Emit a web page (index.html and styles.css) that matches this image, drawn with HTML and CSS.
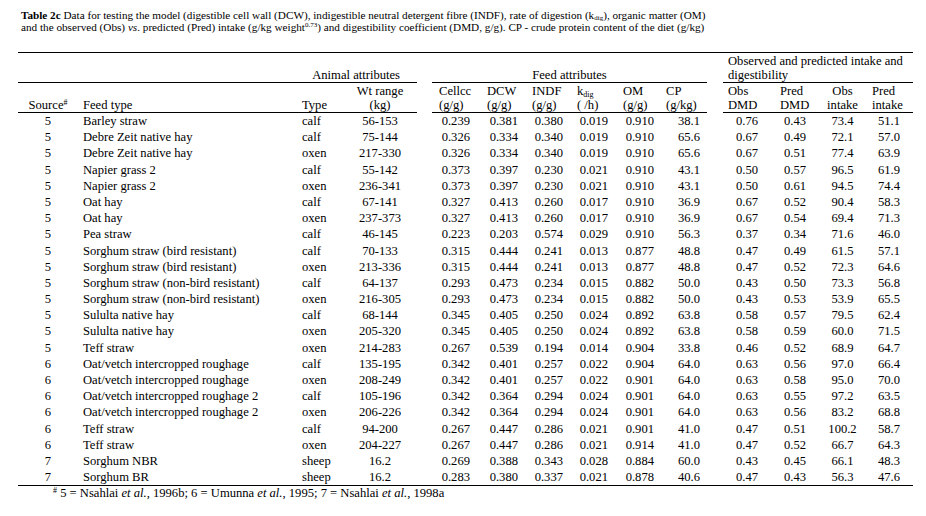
FILE: index.html
```html
<!DOCTYPE html>
<html lang="en">
<head>
<meta charset="utf-8">
<title>Table 2c</title>
<link rel="stylesheet" href="styles.css">
</head>
<body>
<div class="page">
  <p class="caption"><b>Table 2c</b> Data for testing the model (digestible cell wall (DCW), indigestible neutral detergent fibre (INDF), rate of digestion (k<sub>dig</sub>), organic matter (OM)<br>and the observed (Obs) <i>vs</i>. predicted (Pred) intake (g/kg weight<sup>0.73</sup>) and digestibility coefficient (DMD, g/g). CP - crude protein content of the diet (g/kg)</p>

  <div class="table">
    <div class="groups">
      <div class="grp grp-animal"><span>Animal attributes</span></div>
      <div class="grp grp-feed"><span>Feed attributes</span></div>
      <div class="grp grp-obs"><span>Observed and predicted intake and</span><span>digestibility</span></div>
    </div>
    <div class="hrow">
      <div><span>Source<sup>#</sup></span></div>
      <div><span>Feed type</span></div>
      <div><span>Type</span></div>
      <div><span>Wt range</span><span>(kg)</span></div>
      <div><span>Cellcc</span><span>(g/g)</span></div>
      <div><span>DCW</span><span>(g/g)</span></div>
      <div><span>INDF</span><span>(g/g)</span></div>
      <div><span>k<sub>dig</sub></span><span>( /h)</span></div>
      <div><span>OM</span><span>(g/g)</span></div>
      <div><span>CP</span><span>(g/kg)</span></div>
      <div><span>Obs</span><span>DMD</span></div>
      <div><span>Pred</span><span>DMD</span></div>
      <div><span>Obs</span><span>intake</span></div>
      <div><span>Pred</span><span>intake</span></div>
    </div>

    <div class="row"><div>5</div><div>Barley straw</div><div>calf</div><div>56-153</div><div>0.239</div><div>0.381</div><div>0.380</div><div>0.019</div><div>0.910</div><div>38.1</div><div>0.76</div><div>0.43</div><div>73.4</div><div>51.1</div></div>
    <div class="row"><div>5</div><div>Debre Zeit native hay</div><div>calf</div><div>75-144</div><div>0.326</div><div>0.334</div><div>0.340</div><div>0.019</div><div>0.910</div><div>65.6</div><div>0.67</div><div>0.49</div><div>72.1</div><div>57.0</div></div>
    <div class="row"><div>5</div><div>Debre Zeit native hay</div><div>oxen</div><div>217-330</div><div>0.326</div><div>0.334</div><div>0.340</div><div>0.019</div><div>0.910</div><div>65.6</div><div>0.67</div><div>0.51</div><div>77.4</div><div>63.9</div></div>
    <div class="row"><div>5</div><div>Napier grass 2</div><div>calf</div><div>55-142</div><div>0.373</div><div>0.397</div><div>0.230</div><div>0.021</div><div>0.910</div><div>43.1</div><div>0.50</div><div>0.57</div><div>96.5</div><div>61.9</div></div>
    <div class="row"><div>5</div><div>Napier grass 2</div><div>oxen</div><div>236-341</div><div>0.373</div><div>0.397</div><div>0.230</div><div>0.021</div><div>0.910</div><div>43.1</div><div>0.50</div><div>0.61</div><div>94.5</div><div>74.4</div></div>
    <div class="row"><div>5</div><div>Oat hay</div><div>calf</div><div>67-141</div><div>0.327</div><div>0.413</div><div>0.260</div><div>0.017</div><div>0.910</div><div>36.9</div><div>0.67</div><div>0.52</div><div>90.4</div><div>58.3</div></div>
    <div class="row"><div>5</div><div>Oat hay</div><div>oxen</div><div>237-373</div><div>0.327</div><div>0.413</div><div>0.260</div><div>0.017</div><div>0.910</div><div>36.9</div><div>0.67</div><div>0.54</div><div>69.4</div><div>71.3</div></div>
    <div class="row"><div>5</div><div>Pea straw</div><div>calf</div><div>46-145</div><div>0.223</div><div>0.203</div><div>0.574</div><div>0.029</div><div>0.910</div><div>56.3</div><div>0.37</div><div>0.34</div><div>71.6</div><div>46.0</div></div>
    <div class="row"><div>5</div><div>Sorghum straw (bird resistant)</div><div>calf</div><div>70-133</div><div>0.315</div><div>0.444</div><div>0.241</div><div>0.013</div><div>0.877</div><div>48.8</div><div>0.47</div><div>0.49</div><div>61.5</div><div>57.1</div></div>
    <div class="row"><div>5</div><div>Sorghum straw (bird resistant)</div><div>oxen</div><div>213-336</div><div>0.315</div><div>0.444</div><div>0.241</div><div>0.013</div><div>0.877</div><div>48.8</div><div>0.47</div><div>0.52</div><div>72.3</div><div>64.6</div></div>
    <div class="row"><div>5</div><div>Sorghum straw (non-bird resistant)</div><div>calf</div><div>64-137</div><div>0.293</div><div>0.473</div><div>0.234</div><div>0.015</div><div>0.882</div><div>50.0</div><div>0.43</div><div>0.50</div><div>73.3</div><div>56.8</div></div>
    <div class="row"><div>5</div><div>Sorghum straw (non-bird resistant)</div><div>oxen</div><div>216-305</div><div>0.293</div><div>0.473</div><div>0.234</div><div>0.015</div><div>0.882</div><div>50.0</div><div>0.43</div><div>0.53</div><div>53.9</div><div>65.5</div></div>
    <div class="row"><div>5</div><div>Sululta native hay</div><div>calf</div><div>68-144</div><div>0.345</div><div>0.405</div><div>0.250</div><div>0.024</div><div>0.892</div><div>63.8</div><div>0.58</div><div>0.57</div><div>79.5</div><div>62.4</div></div>
    <div class="row"><div>5</div><div>Sululta native hay</div><div>oxen</div><div>205-320</div><div>0.345</div><div>0.405</div><div>0.250</div><div>0.024</div><div>0.892</div><div>63.8</div><div>0.58</div><div>0.59</div><div>60.0</div><div>71.5</div></div>
    <div class="row"><div>5</div><div>Teff straw</div><div>oxen</div><div>214-283</div><div>0.267</div><div>0.539</div><div>0.194</div><div>0.014</div><div>0.904</div><div>33.8</div><div>0.46</div><div>0.52</div><div>68.9</div><div>64.7</div></div>
    <div class="row"><div>6</div><div>Oat/vetch intercropped roughage</div><div>calf</div><div>135-195</div><div>0.342</div><div>0.401</div><div>0.257</div><div>0.022</div><div>0.904</div><div>64.0</div><div>0.63</div><div>0.56</div><div>97.0</div><div>66.4</div></div>
    <div class="row"><div>6</div><div>Oat/vetch intercropped roughage</div><div>oxen</div><div>208-249</div><div>0.342</div><div>0.401</div><div>0.257</div><div>0.022</div><div>0.901</div><div>64.0</div><div>0.63</div><div>0.58</div><div>95.0</div><div>70.0</div></div>
    <div class="row"><div>6</div><div>Oat/vetch intercropped roughage 2</div><div>calf</div><div>105-196</div><div>0.342</div><div>0.364</div><div>0.294</div><div>0.024</div><div>0.901</div><div>64.0</div><div>0.63</div><div>0.55</div><div>97.2</div><div>63.5</div></div>
    <div class="row"><div>6</div><div>Oat/vetch intercropped roughage 2</div><div>oxen</div><div>206-226</div><div>0.342</div><div>0.364</div><div>0.294</div><div>0.024</div><div>0.901</div><div>64.0</div><div>0.63</div><div>0.56</div><div>83.2</div><div>68.8</div></div>
    <div class="row"><div>6</div><div>Teff straw</div><div>calf</div><div>94-200</div><div>0.267</div><div>0.447</div><div>0.286</div><div>0.021</div><div>0.901</div><div>41.0</div><div>0.47</div><div>0.51</div><div>100.2</div><div>58.7</div></div>
    <div class="row"><div>6</div><div>Teff straw</div><div>oxen</div><div>204-227</div><div>0.267</div><div>0.447</div><div>0.286</div><div>0.021</div><div>0.914</div><div>41.0</div><div>0.47</div><div>0.52</div><div>66.7</div><div>64.3</div></div>
    <div class="row"><div>7</div><div>Sorghum NBR</div><div>sheep</div><div>16.2</div><div>0.269</div><div>0.388</div><div>0.343</div><div>0.028</div><div>0.884</div><div>60.0</div><div>0.43</div><div>0.45</div><div>66.1</div><div>48.3</div></div>
    <div class="row"><div>7</div><div>Sorghum BR</div><div>sheep</div><div>16.2</div><div>0.283</div><div>0.380</div><div>0.337</div><div>0.021</div><div>0.878</div><div>40.6</div><div>0.47</div><div>0.43</div><div>56.3</div><div>47.6</div></div>
  </div>

  <p class="foot"><sup>#</sup> 5 = Nsahlai <i>et al.</i>, 1996b; 6 = Umunna <i>et al.</i>, 1995; 7 = Nsahlai <i>et al.</i>, 1998a</p>
</div>
</body>
</html>
```

FILE: styles.css
```css
:root {
  --cols: 60px 224px 41px 74px 15px 52px 45px 45px 46px 43px 44px 16px 52px 45px 45px 48px;
}

* { box-sizing: border-box; }

body {
  margin: 0;
  background: #fff;
  color: #000;
  font-family: "Liberation Serif", "Tinos", "Times New Roman", "DejaVu Serif", serif;
  font-size: 12.6px;
}

.page {
  padding-top: 9px;
}

.caption {
  margin: 0 0 0 21px;
  font-size: 11.2px;
  line-height: 12px;
  white-space: nowrap;
}

.caption sup {
  font-size: 7px;
  vertical-align: 4px;
}

.caption sub {
  font-size: 7px;
  vertical-align: -1px;
}

sup {
  font-size: 8px;
  line-height: 0;
  vertical-align: 4px;
}

sub {
  font-size: 8px;
  line-height: 0;
  vertical-align: -2px;
}

.table {
  margin: 19px 0 0 18px;
  width: 895px;
  border-top: 1px solid #000;
  border-bottom: 1px solid #000;
}

/* group titles */
.groups {
  display: grid;
  grid-template-columns: var(--cols);
  grid-template-rows: 30px;
  line-height: 14px;
}

.grp {
  display: flex;
  flex-direction: column;
  justify-content: flex-end;
  border-bottom: 1px solid #000;
  white-space: nowrap;
}

.grp-animal {
  grid-column: 1 / 5;
  align-items: flex-end;
  padding-right: 17px;
}

.grp-feed {
  grid-column: 6 / 12;
  align-items: center;
}

.grp-obs {
  grid-column: 13 / 17;
  align-items: flex-start;
  padding-left: 5px;
}

/* column headings */
.hrow {
  display: grid;
  grid-template-columns: var(--cols);
  grid-template-rows: 30px;
  line-height: 14px;
}

.hrow > div {
  border-bottom: 1px solid #000;
  display: flex;
  flex-direction: column;
  justify-content: flex-end;
  align-items: flex-start;
  white-space: nowrap;
}

.hrow > :nth-child(1) { align-items: center; }
.hrow > :nth-child(2) { padding-left: 5px; }
.hrow > :nth-child(4) { align-items: center; }
.hrow > :nth-child(5) { grid-column: 6; padding-left: 7px; }
.hrow > :nth-child(6),
.hrow > :nth-child(7),
.hrow > :nth-child(8),
.hrow > :nth-child(9),
.hrow > :nth-child(10) { padding-left: 3px; }
.hrow > :nth-child(11) { grid-column: 13; padding-left: 5px; }
.hrow > :nth-child(12) { padding-left: 5px; }
.hrow > :nth-child(13) { align-items: center; }
.hrow > :nth-child(14) { padding-left: 7px; }

/* data rows */
.row {
  display: grid;
  grid-template-columns: var(--cols);
  grid-template-rows: 16.2px;
  line-height: 16.2px;
  white-space: nowrap;
}

.row > :nth-child(1) { text-align: center; }
.row > :nth-child(2) { padding-left: 5px; }
.row > :nth-child(4) { text-align: center; }
.row > :nth-child(5) { grid-column: 6; text-align: right; padding-right: 14px; }
.row > :nth-child(6) { text-align: right; padding-right: 11px; }
.row > :nth-child(7) { text-align: right; padding-right: 11px; }
.row > :nth-child(8) { text-align: right; padding-right: 12px; }
.row > :nth-child(9) { text-align: right; padding-right: 9px; }
.row > :nth-child(10) { text-align: right; padding-right: 7px; }
.row > :nth-child(11) { grid-column: 13; text-align: right; padding-right: 17px; }
.row > :nth-child(12) { text-align: right; padding-right: 14px; }
.row > :nth-child(13) { text-align: center; }
.row > :nth-child(14) { text-align: right; padding-right: 13px; }

.foot {
  margin: 0 0 0 53px;
  line-height: 14px;
  white-space: nowrap;
}
```
